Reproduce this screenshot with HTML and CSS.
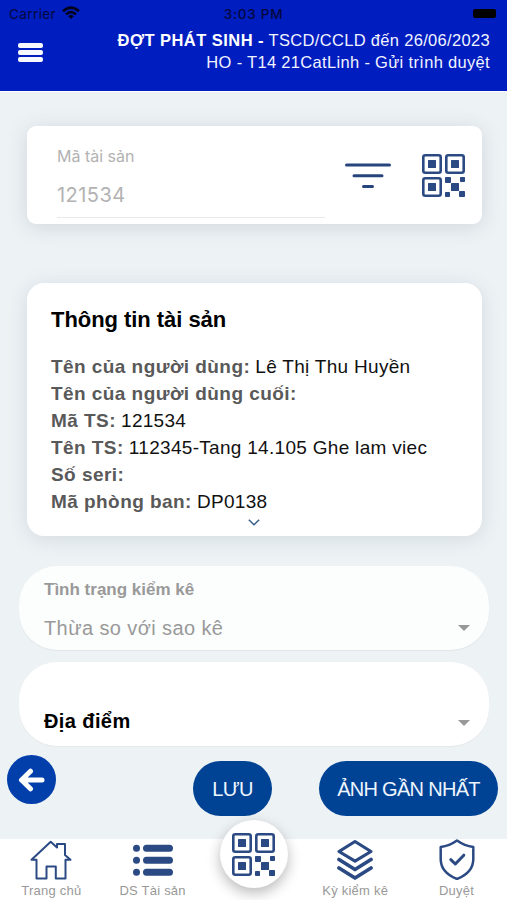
FILE: index.html
```html
<!DOCTYPE html>
<html lang="vi">
<head>
<meta charset="utf-8">
<meta name="viewport" content="width=device-width, initial-scale=1">
<title>Thông tin tài sản</title>
<link rel="stylesheet" href="styles.css">
</head>
<body>
<svg class="defs" width="0" height="0" aria-hidden="true">
  <symbol id="qr" viewBox="0 0 43 43">
    <g fill="none" stroke="currentColor" stroke-width="2.6">
      <rect x="1.3" y="1.3" width="17.4" height="17.4" rx="2"/>
      <rect x="24.3" y="1.3" width="17.4" height="17.4" rx="2"/>
      <rect x="1.3" y="24.3" width="17.4" height="17.4" rx="2"/>
    </g>
    <g fill="currentColor">
      <rect x="6" y="6" width="8" height="8" rx=".5"/>
      <rect x="29" y="6" width="8" height="8" rx=".5"/>
      <rect x="6" y="29" width="8" height="8" rx=".5"/>
      <rect x="23" y="23" width="6" height="6" rx=".7"/>
      <rect x="38" y="23" width="5" height="5" rx=".7"/>
      <rect x="29" y="29" width="8" height="8" rx=".5"/>
      <rect x="23" y="38" width="5" height="5" rx=".7"/>
      <rect x="37" y="37" width="6" height="6" rx=".7"/>
    </g>
  </symbol>
</svg>
<header class="header">
  <div class="status">
    <div class="carrier"><span class="carrier-name">Carrier</span>
      <svg width="18" height="14" viewBox="0 0 18 14" fill="none" stroke="currentColor" stroke-width="2.500"><path d="M1 5.200Q9-2 17 5.200M4 8.400Q9 3.800 14 8.400"/><path d="M9 13 6.200 10.200Q9 8 11.800 10.200Z" fill="currentColor" stroke="none"/></svg>
    </div>
    <span class="clock">3:03 PM</span>
    <span class="battery"></span>
  </div>
  <div class="titlebar">
    <button class="menu" aria-label="Menu"><i></i><i></i><i></i></button>
    <div class="title">
      <div class="title-line"><b>ĐỢT PHÁT SINH -</b> <span>TSCD/CCLD đến 26/06/2023</span></div>
      <div class="title-line">HO - T14 21CatLinh - Gửi trình duyệt</div>
    </div>
  </div>
</header>
<main class="main">
  <section class="search">
    <div class="field">
      <span class="field-label">Mã tài sản</span>
      <span class="field-value">121534</span>
    </div>
    <svg class="filter" width="46" height="26" viewBox="0 0 46 26" fill="none" stroke="currentColor" stroke-width="3" stroke-linecap="round"><path d="M1.500 2H44.500M9 12.700H37M18.500 23.500H27.500"/></svg>
    <svg class="qr" width="43" height="43"><use href="#qr"/></svg>
  </section>
  <section class="info">
    <h2 class="info-title">Thông tin tài sản</h2>
    <div class="row"><b>Tên của người dùng:</b> <span>Lê Thị Thu Huyền</span></div>
    <div class="row"><b>Tên của người dùng cuối:</b></div>
    <div class="row"><b>Mã TS:</b> <span>121534</span></div>
    <div class="row"><b>Tên TS:</b> <span>112345-Tang 14.105 Ghe lam viec</span></div>
    <div class="row"><b>Số seri:</b></div>
    <div class="row"><b>Mã phòng ban:</b> <span>DP0138</span></div>
    <svg class="more" width="12" height="7" viewBox="0 0 12 7" fill="none" stroke="currentColor" stroke-width="1.500"><path d="M.8.8 6 5.800 11.200.8"/></svg>
  </section>
  <section class="select disabled">
    <span class="select-label">Tình trạng kiểm kê</span>
    <div class="select-line"><span class="select-value">Thừa so với sao kê</span><i class="caret"></i></div>
  </section>
  <section class="select place">
    <div class="select-line"><b class="place-name">Địa điểm</b><i class="caret"></i></div>
  </section>
  <div class="actions">
    <button class="back" aria-label="Quay lại"><svg width="27" height="24" viewBox="0 0 27 24" fill="none" stroke="currentColor" stroke-width="5" stroke-linecap="round" stroke-linejoin="round"><path d="M12.500 3.200 3.500 12 12.500 20.800M4.500 12H24"/></svg></button>
    <button class="btn save"><span>LƯU</span></button>
    <button class="btn photo"><span>ẢNH GẦN NHẤT</span></button>
  </div>
</main>
<nav class="nav">
  <a class="tab"><svg width="42" height="41" viewBox="0 0 42 41" fill="none" stroke="currentColor" stroke-width="2" stroke-linejoin="round"><path d="M1.500 20.800 20.700 2.800 27 8.500V5H35V16L40.500 20.800H35.500V39.500H25.800V27.500H16.500V39.500H6.500V20.800Z"/></svg><span>Trang chủ</span></a>
  <a class="tab"><svg width="42" height="41" viewBox="0 0 42 41" fill="none" stroke="currentColor" stroke-width="7" stroke-linecap="round"><path d="M4.500 9.200H4.510M4.500 21.200H4.510M4.500 33.200H4.510M14.500 9.200H37.500M14.500 21.200H37.500M14.500 33.200H37.500"/></svg><span>DS Tài sản</span></a>
  <div class="tab"><a class="scan"><svg class="qr" width="43" height="43"><use href="#qr"/></svg></a></div>
  <a class="tab"><svg width="42" height="41" viewBox="0 0 42 41" fill="none" stroke="currentColor" stroke-width="3.200" stroke-linecap="round" stroke-linejoin="round"><path d="M21 2.500 37 12.500 21 22.200 5 12.500Z"/><path d="M5 20.500 21 30.500 37 20.500M5 29 21 39 37 29" stroke-width="3.700"/></svg><span>Kỳ kiểm kê</span></a>
  <a class="tab"><svg width="42" height="41" viewBox="0 0 42 41" fill="none" stroke="currentColor" stroke-width="2.500" stroke-linejoin="round"><path d="M21 1.500Q28.500 6.800 37.300 8V20Q37.300 33.500 21 40Q4.700 33.500 4.700 20V8Q13.500 6.800 21 1.500Z"/><path d="M14.800 20.700 19.300 25 27.800 16.200" stroke-linecap="round" stroke-width="3"/></svg><span>Duyệt</span></a>
</nav>
</body>
</html>
```
FILE: styles.css
```css
* { box-sizing: border-box; }
html, body { margin: 0; height: 900px; overflow: hidden; }
body {
  display: flex; flex-direction: column; width: 507px;
  background: #edf2f5; color: #111;
  font-family: "Liberation Sans", Arial, sans-serif;
}
button { border: 0; padding: 0; margin: 0; font: inherit; color: #fff; background: none; }
svg { display: block; flex: none; }
span, b { white-space: nowrap; }
.defs { position: absolute; }

.header { height: 91px; flex: none; background: #001dbf; color: #f1f3ff; }
.status {
  display: grid; grid-template-columns: 1fr auto 1fr; align-items: center;
  height: 27px; padding: 0 9px; color: #02083d;
  font: 13.500px/26px Inter, sans-serif;
}
.carrier { display: flex; align-items: center; gap: 6px; letter-spacing: .4px; }
.carrier svg { margin-top: -1px; color: #00031c; }
.clock { font-weight: 500; letter-spacing: .75px; }
.battery { justify-self: end; width: 23px; height: 9px; margin-right: 2px; border-radius: 2px; background: #000; }
.titlebar { display: flex; justify-content: space-between; padding: 2px 17px 0 18px; }
.menu { display: flex; flex-direction: column; gap: 2.500px; margin-top: 14px; height: 19px; }
.menu i { width: 25px; height: 4.500px; border-radius: 2px; background: #f8f9ff; }
.title { text-align: right; font-size: 16.500px; line-height: 22px; letter-spacing: .32px; white-space: nowrap; }
.title b { color: #fff; letter-spacing: .45px; }

.main { flex: 1; display: flex; flex-direction: column; border-top: 1px solid #fff; }
.search {
  display: flex; width: 455px; height: 98px; margin: 34px 0 0 27px; padding: 18px 16px 0 30px;
  border-radius: 9px; background: #fff; color: #27457d; box-shadow: 0 3px 20px rgba(60, 75, 90, .16);
}
.field { display: flex; flex-direction: column; width: 268px; height: 74px; border-bottom: 1px solid #e9e9e9; color: #b2b2b2; font-family: Inter, sans-serif; }
.field-label { font-size: 16px; line-height: 24px; }
.field-value { margin-top: 14px; font-size: 20px; line-height: 26px; letter-spacing: .45px; }
.filter { margin: 19px 0 0 20px; }
.qr { color: #2b4a83; }
.search .qr { margin: 10px 0 0 31px; }

.info {
  display: flex; flex-direction: column; width: 455px; height: 253px; margin: 59px 0 0 27px; padding: 23px 24px 0;
  border-radius: 17px; background: #fff; box-shadow: 0 3px 20px rgba(60, 75, 90, .14);
}
.info-title { margin: 0 0 19px; font-size: 22px; line-height: 28px; letter-spacing: -.05px; color: #000; }
.row { height: 27px; font-size: 19px; line-height: 27px; letter-spacing: .3px; white-space: nowrap; }
.row b { color: #595959; letter-spacing: .44px; }
.row b + span { margin-left: -.5px; }
.more { align-self: center; margin: 4px 2px 0 0; color: #355f91; }

.select { width: 470px; height: 84px; margin-left: 19px; padding: 14px 19px 0 25px; border-radius: 38px; background: #fff; }
.disabled { margin-top: 30px; background: #fcfdfd; color: #999; box-shadow: 0 1px 1px #dfe5e8; }
.place { margin-top: 12px; padding-top: 45px; color: #000; box-shadow: 0 1px 1px #e4e9e9; }
.select-label { display: block; font-size: 17px; line-height: 20px; font-weight: 700; }
.select-line { display: flex; justify-content: space-between; align-items: center; height: 28px; }
.select-value { font-size: 20px; letter-spacing: .4px; }
.disabled .select-line { margin-top: 14px; }
.place-name { font-size: 20px; letter-spacing: .4px; }
.caret { width: 12px; height: 6px; background: #999; clip-path: polygon(0 0, 100% 0, 50% 100%); }
.place .caret { margin-top: 4px; }

.actions { display: flex; align-items: flex-start; margin-top: 9px; padding-left: 7px; }
.back { display: flex; align-items: center; justify-content: center; width: 49px; height: 49px; border-radius: 50%; background: #033fab; }
.btn { height: 55px; margin-top: 6px; padding-top: 2px; border-radius: 28px; background: #004394; font-size: 20px; color: #eff5ff; letter-spacing: -.7px; }
.save { width: 79px; margin-left: 137px; }
.photo { width: 179px; margin-left: 47px; }

.nav { display: grid; grid-template-columns: repeat(5, 101.300px); height: 61px; padding-left: .7px; flex: none; background: #fff; color: #2b4a83; }
.tab { display: flex; flex-direction: column; align-items: center; }
.tab > span { font-size: 13px; line-height: 21px; letter-spacing: .22px; color: #999; }
.scan { display: flex; align-items: center; justify-content: center; flex: none; width: 68px; height: 68px; margin-top: -19px; border-radius: 50%; background: #fff; box-shadow: 0 5px 14px rgba(0, 0, 0, .28); }
```
